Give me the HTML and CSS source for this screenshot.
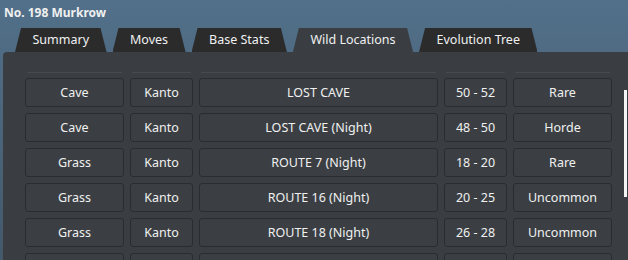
FILE: index.html
```html
<!DOCTYPE html>
<html>
<head>
<meta name="viewport" content="width=device-width, initial-scale=1">
<link rel="stylesheet" href="styles.css">
</head>
<body>

<div class="title">No. 198 Murkrow</div>

<div class="tabs">
    <span class="tab">Summary</span>
    <span class="tab">Moves</span>
    <span class="tab">Base Stats</span>
    <span class="tab active">Wild Locations</span>
    <span class="tab">Evolution Tree</span>
</div>

<div class="panel">
    <div class="table">
        <div class="head"><i></i><i></i><i></i><i></i><i></i></div>

        <div class="row">
            <span>Cave</span><span>Kanto</span><span>LOST CAVE</span><span>50 - 52</span><span>Rare</span>
        </div>
        <div class="row">
            <span>Cave</span><span>Kanto</span><span>LOST CAVE (Night)</span><span>48 - 50</span><span>Horde</span>
        </div>
        <div class="row">
            <span>Grass</span><span>Kanto</span><span>ROUTE 7 (Night)</span><span>18 - 20</span><span>Rare</span>
        </div>
        <div class="row">
            <span>Grass</span><span>Kanto</span><span>ROUTE 16 (Night)</span><span>20 - 25</span><span>Uncommon</span>
        </div>
        <div class="row">
            <span>Grass</span><span>Kanto</span><span>ROUTE 18 (Night)</span><span>26 - 28</span><span>Uncommon</span>
        </div>
        <div class="row">
            <span></span><span></span><span></span><span></span><span></span>
        </div>
    </div>

    <!-- scrollbar -->
    <div class="scroll"><div class="thumb"></div></div>
</div>

</body>
</html>
```

FILE: styles.css
```css
/* Page */
* {
    box-sizing: border-box;
}

html, body {
    height: 100%;
}

body {
    margin: 0;
    overflow: hidden;
    display: flex;
    flex-direction: column;
    background: linear-gradient(#52708a, #44596a);
    font-family: "Noto Sans", "Open Sans", sans-serif;
    font-size: 12.5px;
    color: #f0f0f0;
}

/* Window title */
.title {
    flex-shrink: 0;
    height: 28px;
    padding: 5px 0 0 4px;
    font-size: 12px;
    font-weight: bold;
    line-height: 16px;
}

/* Tab bar */
.tabs {
    flex-shrink: 0;
    display: flex;
    gap: 6px;
    height: 24px;
    padding-left: 15px;
}

.tab {
    padding: 0 17.5px;
    line-height: 24px;
    background: #2b2b2c;
    clip-path: polygon(6px 0, calc(100% - 6px) 0, 100% 100%, 0 100%);
    border-radius: 5px 5px 0 0;
}

.tab.active {
    background: #3a3e42;
}

/* Content panel */
.panel {
    flex: 1;
    min-height: 0;
    display: flex;
    margin-left: 3px;
    padding: 20px 0 0 22px;
    background: #3a3e42;
    border-top-left-radius: 4px;
}

.table {
    display: flex;
    flex-direction: column;
    gap: 6px;
}

.head, .row {
    display: grid;
    grid-template-columns: 99px 63px 239px 63px 99px;
    column-gap: 6px;
}

.head i {
    height: 1px;
    margin: 0 2px -1px 2px;
    background: #474b50;
}

.row span {
    height: 29px;
    display: flex;
    align-items: center;
    justify-content: center;
    border: 1px solid #2a2d30;
    border-radius: 3px;
    background: #3b3f43;
}

/* Scrollbar */
.scroll {
    margin-left: auto;
    width: 4px;
    padding-top: 18px;
}

.thumb {
    width: 3px;
    height: 107px;
    background: #f4f4f4;
}
```
